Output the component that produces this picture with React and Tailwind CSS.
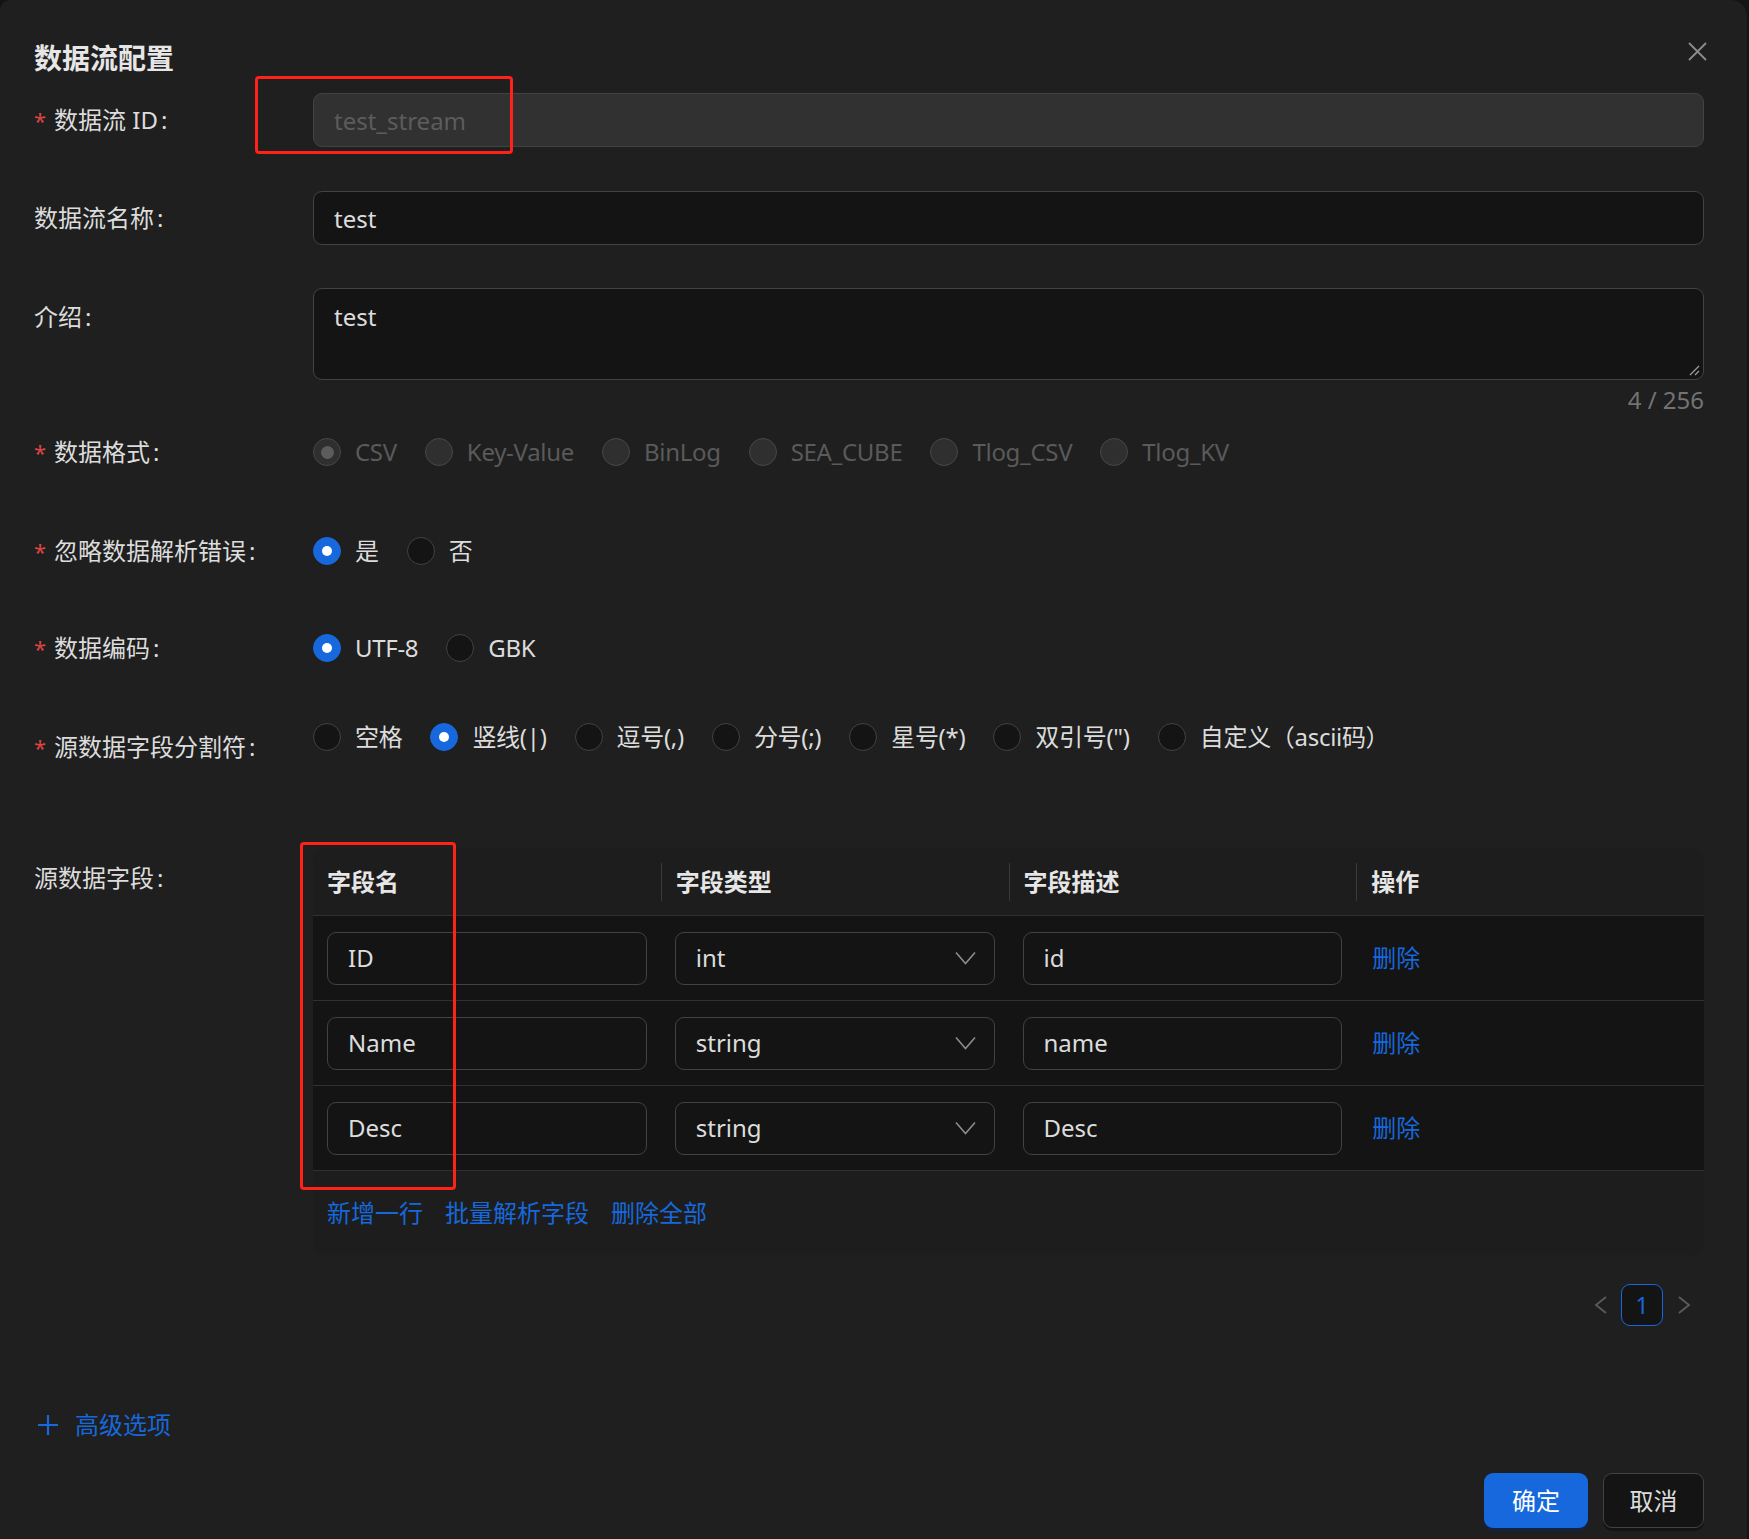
import React from 'react';

const rows = [
  ['ID', 'int', 'id'],
  ['Name', 'string', 'name'],
  ['Desc', 'string', 'Desc'],
];

const Label = ({ required, children, className = '' }) => (
  <div className={`w-[279px] shrink-0 flex items-center text-[#dcdcdc] ${className}`}>
    {required && <span className="w-[20px] text-[#dc4446] text-[22px] leading-none">*</span>}
    <span>{children}</span>
    <span className="ml-[3px]">:</span>
  </div>
);

const Radio = ({ label, checked, disabled }) => {
  let circle = 'border-[#424242] bg-[#141414]';
  if (disabled) circle = 'border-[#474747] bg-[#2f2f2f]';
  else if (checked) circle = 'border-[#1668dc] bg-[#1668dc]';
  return (
    <div className="flex items-center mr-[28px]">
      <span className={`w-[28px] h-[28px] rounded-full border flex items-center justify-center ${circle}`}>
        {checked && (
          <span className={disabled ? 'w-[13px] h-[13px] rounded-full bg-[#5c5c5c]' : 'w-[10px] h-[10px] rounded-full bg-white'} />
        )}
      </span>
      <span className={`ml-[14px] whitespace-nowrap tracking-[-0.3px] ${disabled ? 'text-[#5a5a5a]' : 'text-[#dcdcdc]'}`}>{label}</span>
    </div>
  );
};

const Chevron = () => (
  <svg width="21" height="14" viewBox="0 0 21 14" fill="none">
    <path d="M1 1.5 L10.5 12.5 L20 1.5" stroke="#8c8c8c" strokeWidth="1.6" />
  </svg>
);

const Field = ({ value, select }) => (
  <div className="h-[53px] w-full rounded-[9px] border border-[#424242] bg-[#141414] pl-[20px] pr-[18px] flex items-center justify-between text-[#dcdcdc]">
    <span>{value}</span>
    {select && <Chevron />}
  </div>
);

const Row = ({ label, required, className = '', children }) => (
  <div className={`flex ${className}`}>
    <Label required={required} className="h-[54px]">{label}</Label>
    <div className="flex-1 flex items-center h-[54px]">{children}</div>
  </div>
);

export default function App() {
  return (
    <div className="h-[1539px] overflow-hidden bg-[#141414] font-['Noto_Sans','Noto_Sans_CJK_SC',sans-serif] text-[24px] leading-[36px]">
      <div className="relative w-[1747px] min-h-[1539px] bg-[#1f1f1f] rounded-tr-[16px] rounded-tl-[10px] pt-[38px] pl-[34px] pr-[43px] pb-[20px]">
        <h1 className="text-[28px] leading-[40px] font-bold text-[#e6e6e6]">数据流配置</h1>
        <button className="absolute top-[42px] right-[40px] w-[19px] h-[19px]">
          <svg width="19" height="19" viewBox="0 0 19 19" fill="none">
            <path d="M1 1 L18 18 M18 1 L1 18" stroke="#8c8c8c" strokeWidth="1.8" />
          </svg>
        </button>

        <Row label="数据流 ID" required className="mt-[15px]">
          <div className="h-[54px] w-full rounded-[9px] border border-[#424242] bg-[#313131] px-[20px] pt-[2px] flex items-center text-[#5c5c5c]">
            test_stream
          </div>
        </Row>

        <Row label="数据流名称" className="mt-[44px]">
          <div className="h-[54px] w-full rounded-[9px] border border-[#424242] bg-[#141414] px-[20px] pt-[2px] flex items-center text-[#dcdcdc]">
            test
          </div>
        </Row>

        <div className="flex mt-[43px]">
          <Label className="h-[58px]">介绍</Label>
          <div className="flex-1">
            <div className="relative h-[92px] rounded-[9px] border border-[#424242] bg-[#141414] px-[20px] pt-[10px] text-[#dcdcdc]">
              test
              <svg className="absolute right-[3px] bottom-[3px]" width="11" height="11" viewBox="0 0 11 11" fill="none">
                <path d="M1 10 L10 1 M6 10 L10 6" stroke="#9a9a9a" strokeWidth="1.3" />
              </svg>
            </div>
            <div className="h-[40px] leading-[40px] text-right text-[#737373]">4 / 256</div>
          </div>
        </div>

        <Row label="数据格式" required className="mt-[5px]">
          <Radio label="CSV" checked disabled />
          <Radio label="Key-Value" disabled />
          <Radio label="BinLog" disabled />
          <Radio label="SEA_CUBE" disabled />
          <Radio label="Tlog_CSV" disabled />
          <Radio label="Tlog_KV" disabled />
        </Row>

        <Row label="忽略数据解析错误" required className="mt-[45px]">
          <Radio label="是" checked />
          <Radio label="否" />
        </Row>

        <Row label="数据编码" required className="mt-[43px]">
          <Radio label="UTF-8" checked />
          <Radio label="GBK" />
        </Row>

        <div className="flex mt-[35px]">
          <Label required className="h-[54px] mt-[10px]">源数据字段分割符</Label>
          <div className="flex-1 flex items-center h-[54px]">
            <Radio label="空格" />
            <Radio label="竖线(|)" checked />
            <Radio label="逗号(,)" />
            <Radio label="分号(;)" />
            <Radio label="星号(*)" />
            <Radio label={'双引号(")'} />
            <Radio label="自定义（ascii码）" />
          </div>
        </div>

        <div className="flex mt-[74px]">
          <Label className="h-[54px] mt-[3px]">源数据字段</Label>
          <div className="flex-1 rounded-[12px] bg-[#1d1d1d] overflow-hidden">
            <div className="grid grid-cols-4 h-[68px] border-b border-[#303030] font-bold text-[#e6e6e6]">
              {['字段名', '字段类型', '字段描述', '操作'].map((h, i) => (
                <div key={h} className={`flex items-center ${i === 0 ? 'pl-[14px]' : ''}`}>
                  {i > 0 && <span className="w-px h-[38px] bg-[#3a3a3a] mr-[14px]" />}
                  {h}
                </div>
              ))}
            </div>
            {rows.map((r) => (
              <div key={r[0]} className="grid grid-cols-4 h-[85px] border-b border-[#303030] bg-[#141414]">
                <div className="flex items-center px-[14px]"><Field value={r[0]} /></div>
                <div className="flex items-center px-[14px]"><Field value={r[1]} select /></div>
                <div className="flex items-center px-[14px]"><Field value={r[2]} /></div>
                <div className="flex items-center px-[16px] text-[#1668dc]">删除</div>
              </div>
            ))}
            <div className="h-[84px] flex items-center gap-[22px] px-[14px] text-[#1668dc]">
              <span>新增一行</span>
              <span>批量解析字段</span>
              <span>删除全部</span>
            </div>
          </div>
        </div>

        <div className="mt-[29px] flex justify-end -mr-[1px]">
          <div className="w-[42px] h-[42px] flex items-center justify-center">
            <svg width="13" height="18" viewBox="0 0 13 18" fill="none">
              <path d="M12 1 L2 9 L12 17" stroke="#5c5c5c" strokeWidth="1.8" />
            </svg>
          </div>
          <div className="w-[42px] h-[42px] rounded-[9px] border border-[#1668dc] bg-[#141414] flex items-center justify-center text-[#1668dc] text-[23px]">
            1
          </div>
          <div className="w-[42px] h-[42px] flex items-center justify-center">
            <svg width="13" height="18" viewBox="0 0 13 18" fill="none">
              <path d="M1 1 L11 9 L1 17" stroke="#5c5c5c" strokeWidth="1.8" />
            </svg>
          </div>
        </div>

        <div className="mt-[79px] h-[40px] flex items-center text-[#1668dc]">
          <svg className="ml-[4px]" width="20" height="20" viewBox="0 0 20 20" fill="none">
            <path d="M10 0 V20 M0 10 H20" stroke="#1668dc" strokeWidth="2.2" />
          </svg>
          <span className="ml-[17px]">高级选项</span>
        </div>

        <div className="mt-[28px] flex justify-end gap-[15px]">
          <button className="h-[55px] w-[104px] rounded-[9px] bg-[#1668dc] text-white shadow-[0_3px_0_rgba(10,40,90,0.6)]">确定</button>
          <button className="h-[55px] w-[101px] rounded-[9px] border border-[#424242] bg-[#141414] text-[#dcdcdc] shadow-[0_3px_0_rgba(0,0,0,0.35)]">取消</button>
        </div>

        <div className="absolute left-[255px] top-[76px] w-[258px] h-[78px] border-[3px] border-[#ff2218] rounded-[4px]" />
        <div className="absolute left-[300px] top-[842px] w-[156px] h-[348px] border-[3px] border-[#ff2218] rounded-[4px]" />
      </div>
    </div>
  );
}
